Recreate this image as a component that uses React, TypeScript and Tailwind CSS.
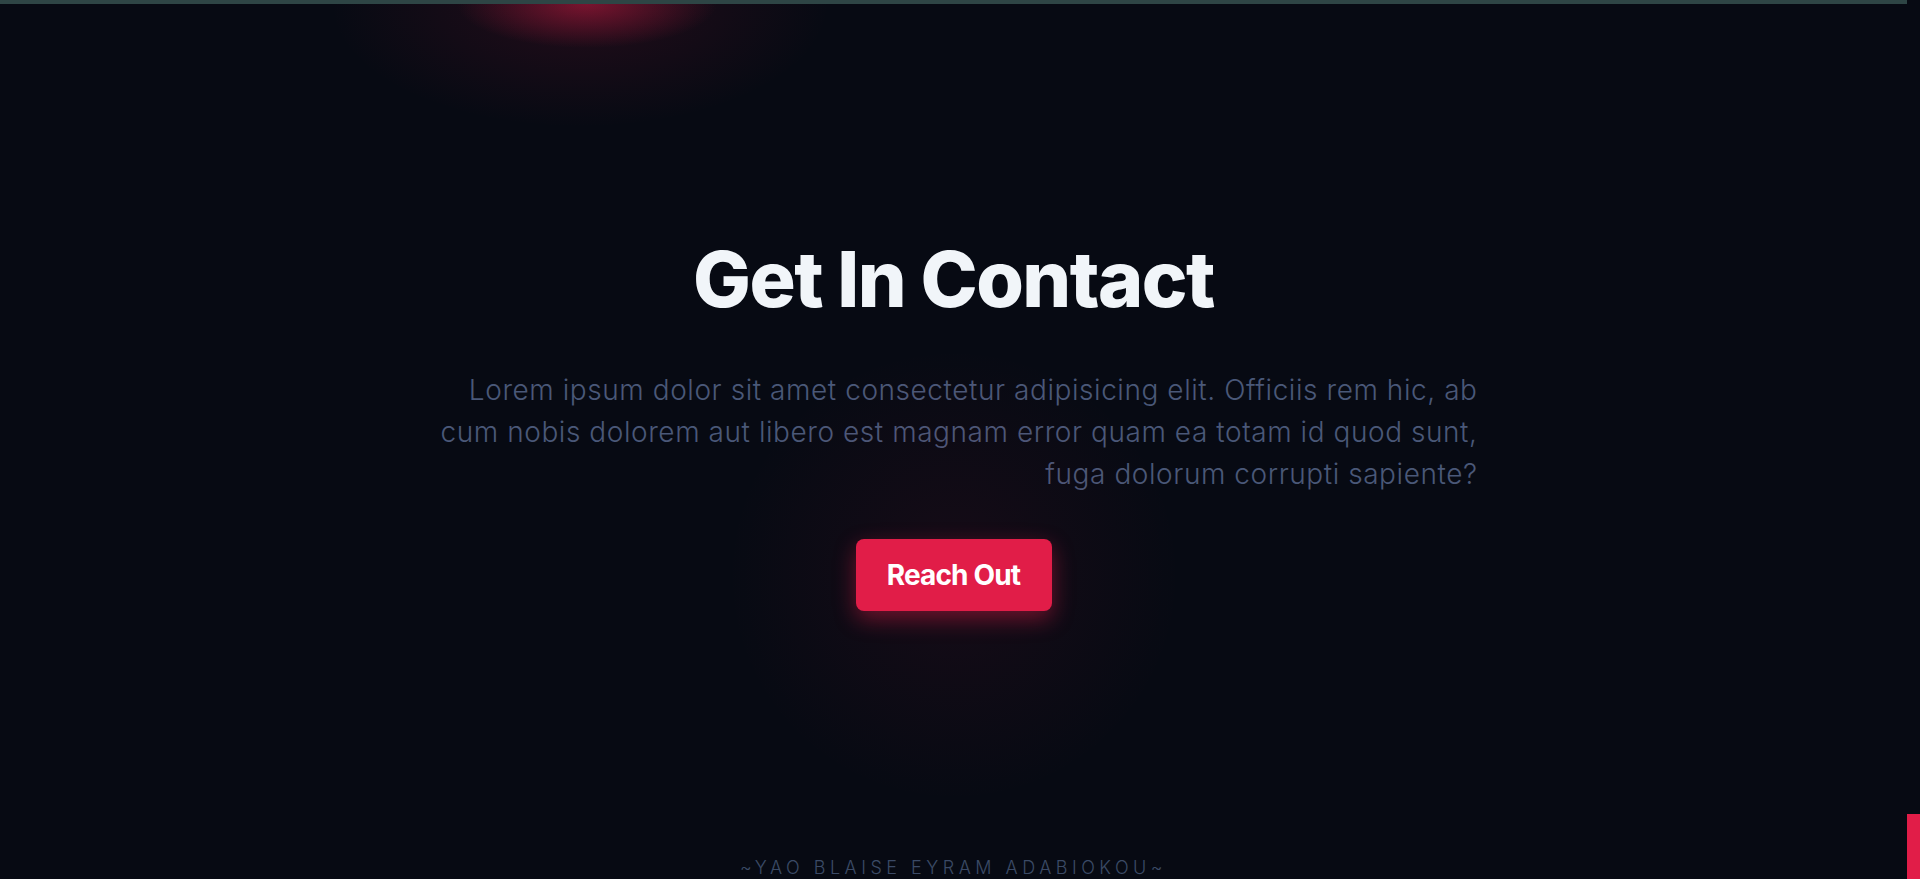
export default function App() {
  return (
    <div className="flex h-[879px] w-full overflow-hidden bg-[#070a13] font-['Inter',sans-serif]">
      <main className="relative flex flex-1 flex-col items-center overflow-hidden">
        <div className="h-[4px] w-full shrink-0 bg-[#2e4545]" />

        {/* glow leaking in from the section above */}
        <div className="pointer-events-none absolute left-[330px] top-[4px] h-[190px] w-[500px] bg-[radial-gradient(ellipse_50%_65%_at_50%_0%,rgba(225,29,72,0.13),transparent)]" />
        <div className="pointer-events-none absolute left-[457px] top-[4px] h-[44px] w-[260px] bg-[radial-gradient(ellipse_50%_100%_at_50%_0%,rgba(225,29,72,0.45),transparent)]" />

        <section className="relative flex flex-col items-center pt-[237px]">
          <h1 className="text-[77px] font-extrabold leading-none tracking-[-0.02em] text-[#f1f5f9]">
            Get In Contact
          </h1>

          <p className="mt-[51px] w-[1048px] text-right text-[28px] font-light leading-[42px] tracking-[0.02em] text-[#4a5878]">
            Lorem ipsum dolor sit amet consectetur adipisicing elit. Officiis rem hic, ab
            <br />
            cum nobis dolorem aut libero est magnam error quam ea totam id quod sunt,
            <br />
            fuga dolorum corrupti sapiente?
          </p>

          <div className="relative mt-[44px] flex items-center justify-center">
            <div className="pointer-events-none absolute left-1/2 top-1/2 h-[460px] w-[460px] -translate-x-1/2 -translate-y-1/2 rounded-full bg-[radial-gradient(circle,rgba(225,29,72,0.07),transparent_70%)]" />
            <button className="relative h-[72px] w-[196px] rounded-lg bg-[#e11d48] text-[28px] font-bold tracking-[-0.03em] text-white shadow-[0_8px_22px_rgba(225,29,72,0.45)]">
              Reach Out
            </button>
          </div>
        </section>

        <footer className="mt-auto mb-[-3px] text-lg font-light leading-7 tracking-[0.25em] text-[#3b4a66]">
          ~YAO BLAISE EYRAM ADABIOKOU~
        </footer>
      </main>

      <div className="flex w-[13px] shrink-0 flex-col justify-end">
        <div className="h-[65px] w-full bg-[#e11d48]" />
      </div>
    </div>
  );
}
